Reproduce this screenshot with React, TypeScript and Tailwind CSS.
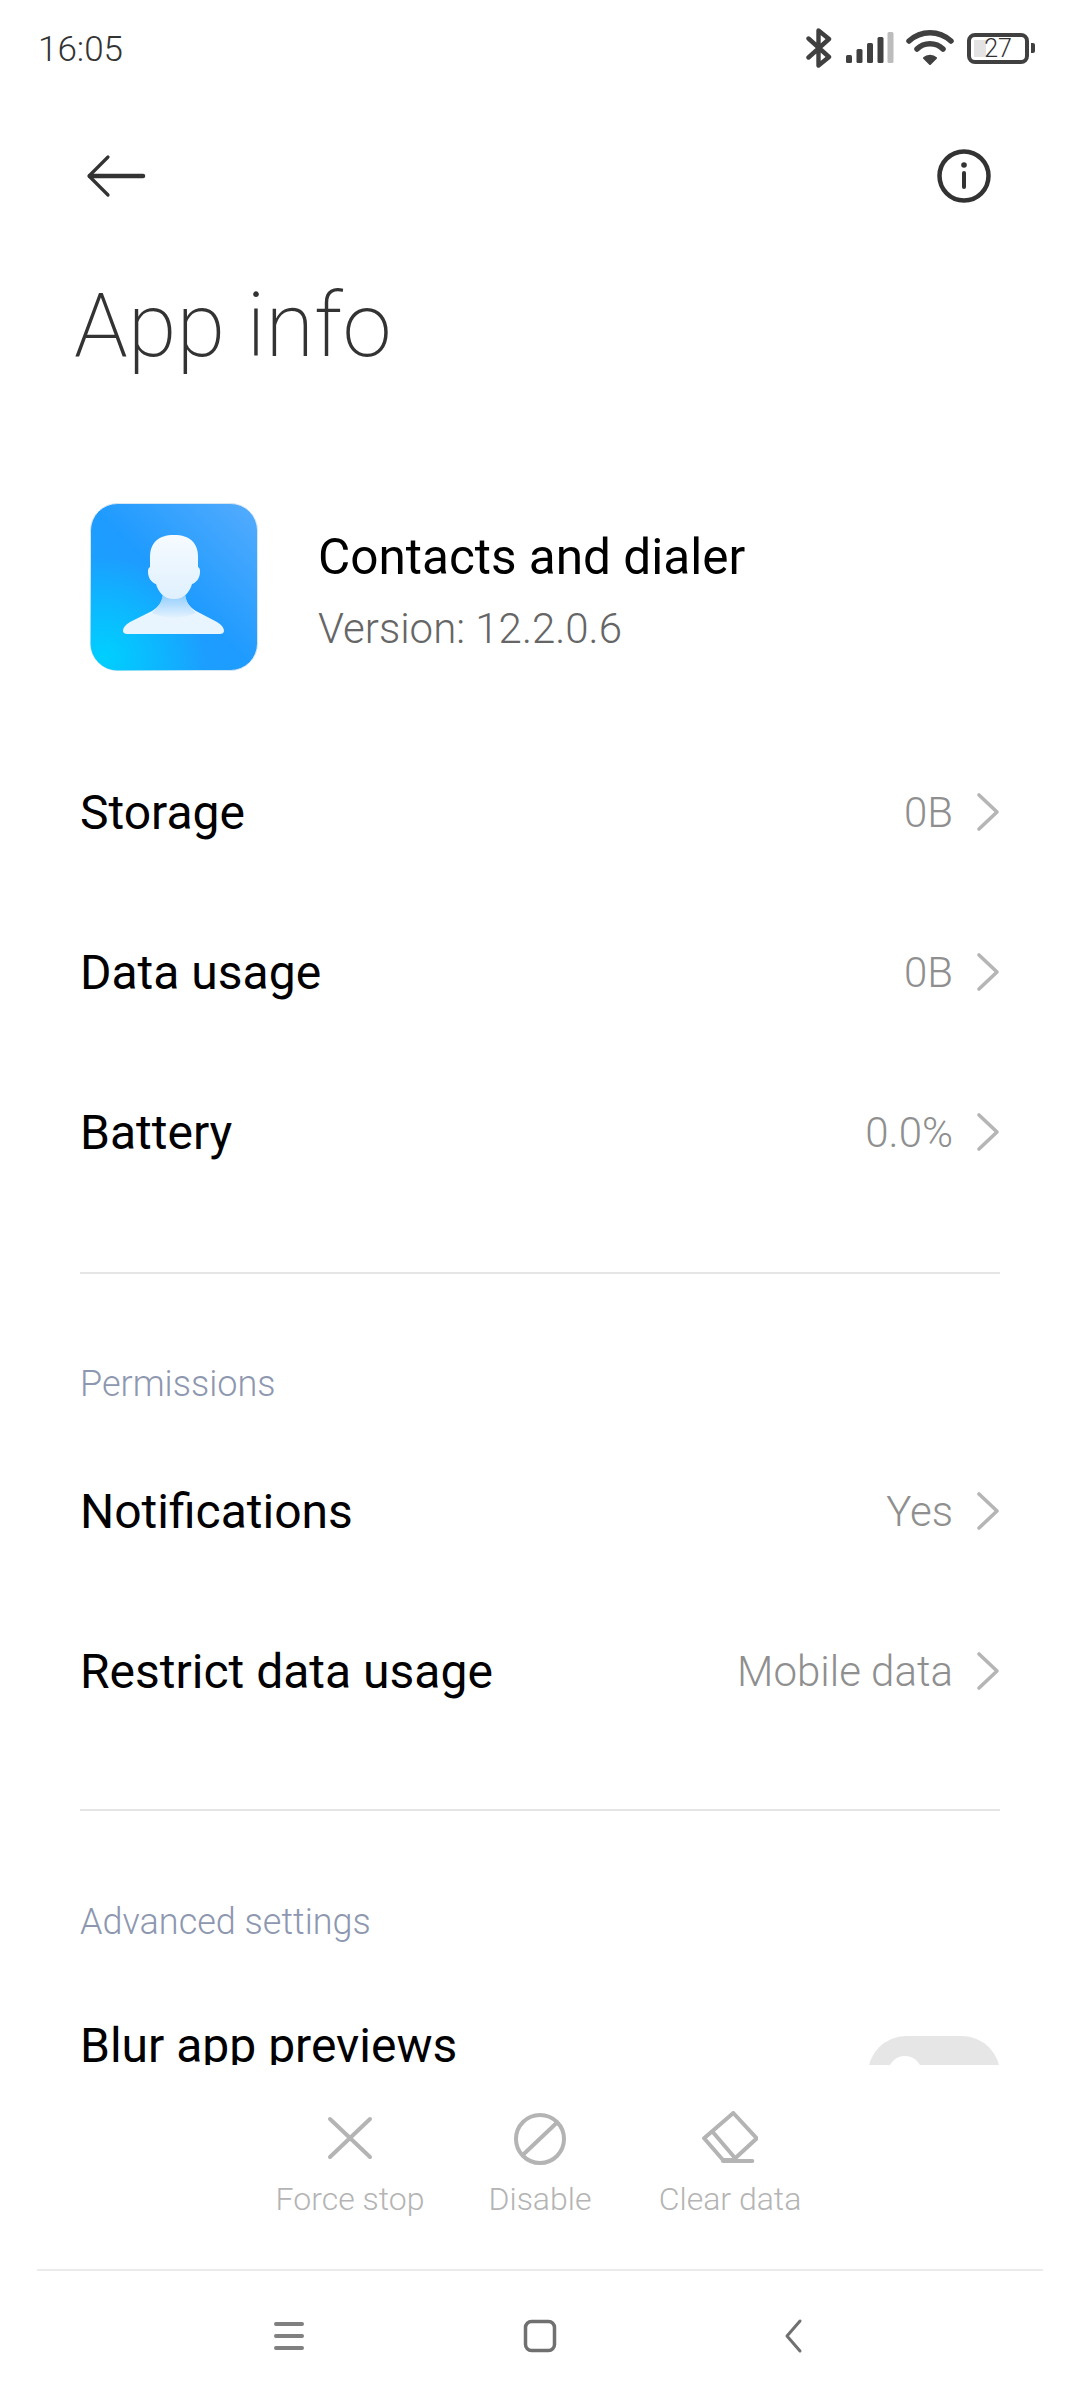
import React from 'react';

const font = "font-['Roboto','Noto_Sans',sans-serif]";

function Bluetooth() {
  return (
    <svg width="26" height="40" viewBox="0 0 26 40" fill="none" stroke="#404040" strokeWidth="4.4" strokeLinecap="round" strokeLinejoin="round">
      <path d="M2.5 10.5 L23 29 L12.5 37.5 V2.5 L23 11 L2.5 29.5" />
    </svg>
  );
}

function Signal() {
  const bars = [
    { x: 0, h: 8, c: '#404040' },
    { x: 10.5, h: 14, c: '#404040' },
    { x: 21, h: 20, c: '#404040' },
    { x: 31.5, h: 26, c: '#404040' },
    { x: 41.5, h: 31, c: '#bcbcbc' },
  ];
  return (
    <svg width="48" height="32" viewBox="0 0 48 32">
      {bars.map((b) => (
        <rect key={b.x} x={b.x} y={31 - b.h} width="6" height={b.h} rx="1.5" fill={b.c} />
      ))}
    </svg>
  );
}

function Wifi() {
  return (
    <svg width="48" height="36" viewBox="0 0 48 36" fill="none" stroke="#404040" strokeWidth="5.5" strokeLinecap="round">
      <path d="M3 11 C15 0 33 0 45 11" />
      <path d="M11 19 C18 12 30 12 37 19" />
      <path d="M24 34 L18 28 C21 25 27 25 30 28 Z" fill="#404040" stroke="#404040" strokeWidth="2" strokeLinejoin="round" />
    </svg>
  );
}

function Battery() {
  return (
    <div className="flex items-center">
      <div className="relative flex h-[31px] w-[62px] items-center justify-center rounded-[8px] border-[4px] border-[#404040]">
        <div className="absolute left-[3px] top-[3px] h-[17px] w-[12px] bg-[#e3e3e3]" />
        <span className="relative text-[25px] font-light leading-none text-[#333]">27</span>
      </div>
      <div className="ml-[2px] h-[10px] w-[4px] rounded-r-[2px] bg-[#404040]" />
    </div>
  );
}

function AppIcon() {
  return (
    <svg width="168" height="168" viewBox="0 0 168 168">
      <defs>
        <linearGradient id="iconBg" x1="1" y1="0" x2="0" y2="1">
          <stop offset="0" stopColor="#55acfd" />
          <stop offset="0.5" stopColor="#1f9bff" />
          <stop offset="1" stopColor="#12a8ff" />
        </linearGradient>
        <radialGradient id="iconGlow" cx="0.08" cy="0.92" r="0.6">
          <stop offset="0" stopColor="#00cfff" />
          <stop offset="1" stopColor="#00cfff" stopOpacity="0" />
        </radialGradient>
        <linearGradient id="person" x1="0" y1="0" x2="0" y2="1">
          <stop offset="0" stopColor="#f6fbff" />
          <stop offset="1" stopColor="#dff0fe" />
        </linearGradient>
        <linearGradient id="neck" x1="0" y1="0" x2="0" y2="1">
          <stop offset="0" stopColor="#8ccaff" />
          <stop offset="1" stopColor="#e3f2fe" />
        </linearGradient>
      </defs>
      <rect x="0.5" y="0.5" width="167" height="167" rx="27" fill="url(#iconBg)" stroke="#d6e6f2" />
      <rect x="0.5" y="0.5" width="167" height="167" rx="27" fill="url(#iconGlow)" />
      <path
        d="M62 108 C68 104 72 100 73 92 L95 92 C96 100 100 104 106 108 L127 119 C132 122 134 125 134 128 C134 130 132 131 130 131 L37 131 C35 131 33 130 33 128 C33 125 35 122 40 119 Z"
        fill="#e8f4fe"
      />
      <path d="M73 90 L95 90 C96 100 100 104 106 110 C92 116 76 116 62 110 C68 104 72 100 73 90 Z" fill="url(#neck)" />
      <path
        d="M84 32 C68 32 60 40 60 54 L60 64 C58 65 58 67 58 69 C58 75 62 80 66 81 C68 88 73 96 84 96 C95 96 100 88 102 81 C106 80 110 75 110 69 C110 67 110 65 108 64 L108 54 C108 40 100 32 84 32 Z"
        fill="url(#person)"
      />
    </svg>
  );
}

function Row({ label, value }: { label: string; value: string }) {
  return (
    <div className="flex h-[160px] items-center justify-between">
      <span className="mt-[-1px] text-[48px] text-black">{label}</span>
      <div className="mt-[-2px] flex items-center">
        <span className="text-[42px] font-light text-[#8f8f8f]">{value}</span>
        <svg width="24" height="40" viewBox="0 0 24 40" fill="none" stroke="#b5b5b5" strokeWidth="3.6" strokeLinecap="round" strokeLinejoin="round" className="ml-[23px]">
          <path d="M3 3 L21 20 L3 37" />
        </svg>
      </div>
    </div>
  );
}

function Action({ label, children }: { label: string; children: React.ReactNode }) {
  return (
    <div className="flex w-[190px] flex-col items-center">
      <svg width="56" height="56" viewBox="0 0 56 56" fill="none" stroke="#b4b4b4" strokeWidth="4" strokeLinecap="round" strokeLinejoin="round">
        {children}
      </svg>
      <span className="mt-[12px] text-[32px] font-light leading-[40px] text-[#b4b4b4]">{label}</span>
    </div>
  );
}

export default function App() {
  return (
    <div className={`${font} flex h-[2400px] w-[1080px] flex-col overflow-hidden bg-white`}>
      <div className="flex-1 overflow-hidden">
        {/* status bar */}
        <div className="flex h-[96px] items-center justify-between pl-[38px] pr-[45px]">
          <span className="mt-[5px] text-[35px] font-light text-[#333]">16:05</span>
          <div className="flex items-center">
            <Bluetooth />
            <div className="ml-[14px]"><Signal /></div>
            <div className="ml-[12px]"><Wifi /></div>
            <div className="ml-[13px]"><Battery /></div>
          </div>
        </div>

        {/* toolbar */}
        <div className="flex h-[160px] items-center justify-between pl-[86px] pr-[89px]">
          <svg width="60" height="44" viewBox="0 0 60 44" fill="none" stroke="#333" strokeWidth="4.5" strokeLinecap="round" strokeLinejoin="round">
            <path d="M57 22 H4" />
            <path d="M22 3 L3 22 L22 41" strokeWidth="3.2" />
          </svg>
          <svg width="54" height="54" viewBox="0 0 54 54" fill="none" stroke="#333" strokeWidth="4.5">
            <circle cx="27" cy="27" r="24.5" />
            <path d="M27 24 V38" strokeLinecap="round" strokeWidth="4" />
            <circle cx="27" cy="16" r="2.8" fill="#333" stroke="none" />
          </svg>
        </div>

        <h1 className="ml-[74px] mt-[20px] text-[88.5px] font-extralight leading-[100px] text-[#333]">App info</h1>

        {/* app header */}
        <div className="ml-[90px] mt-[127px] flex items-center">
          <AppIcon />
          <div className="ml-[60px] pt-[6px]">
            <div className="text-[49.5px] leading-[60px] text-black">Contacts and dialer</div>
            <div className="mt-[17px] text-[42px] font-light leading-[50px] text-[#666]">Version: 12.2.0.6</div>
          </div>
        </div>

        <div className="px-[80px]">
          <div className="mt-[62px]">
            <Row label="Storage" value="0B" />
            <Row label="Data usage" value="0B" />
            <Row label="Battery" value="0.0%" />
          </div>
          <div className="mt-[59px] h-[2px] bg-[#e5e5e5]" />
          <div className="mt-[90px] text-[36px] font-light leading-[40px] text-[#8e97b0]">Permissions</div>
          <div className="mt-[28px]">
            <Row label="Notifications" value="Yes" />
            <Row label="Restrict data usage" value="Mobile data" />
          </div>
          <div className="mt-[57px] h-[2px] bg-[#e5e5e5]" />
          <div className="mt-[91px] text-[36px] font-light leading-[40px] text-[#8e97b0]">Advanced settings</div>
          <div className="mt-[74px] flex items-start justify-between">
            <span className="text-[48px] leading-[60px] text-black">Blur app previews</span>
            <div className="relative mt-[20px] h-[76px] w-[132px] rounded-full bg-[#e6e6e6]">
              <div className="absolute left-[20px] top-[20px] h-[36px] w-[34px] rounded-full bg-white" />
            </div>
          </div>
        </div>
      </div>

      {/* bottom actions */}
      <div className="h-[335px] shrink-0 bg-white">
        <div className="flex h-[204px] items-start justify-center pt-[46px]">
          <Action label="Force stop">
            <path d="M8 8 L48 46 M48 8 L8 46" />
          </Action>
          <Action label="Disable">
            <circle cx="28" cy="28" r="24" />
            <path d="M44.5 12 L11.8 43" />
          </Action>
          <Action label="Clear data">
            <path d="M31.3 2 L54.8 27.3 L31.3 49 H21 L2.1 27.3 Z" />
            <path d="M11.4 21.7 L33 47" />
            <path d="M21 50 H50.3" />
          </Action>
        </div>
        <div className="mx-[37px] h-[2px] bg-[#ebebeb]" />
        <div className="flex h-[129px] items-center justify-center">
          <div className="flex w-[253px] justify-center pl-[3px]">
            <svg width="32" height="32" viewBox="0 0 32 32" fill="none" stroke="#808080" strokeWidth="4" strokeLinecap="round">
              <path d="M3 4 H29 M3 16 H29 M3 28 H29" />
            </svg>
          </div>
          <div className="flex w-[253px] justify-center">
            <svg width="34" height="34" viewBox="0 0 34 34" fill="none" stroke="#707070" strokeWidth="3.5">
              <rect x="2.5" y="2.5" width="29" height="29" rx="6" />
            </svg>
          </div>
          <div className="flex w-[253px] justify-center">
            <svg width="22" height="36" viewBox="0 0 22 36" fill="none" stroke="#707070" strokeWidth="3" strokeLinecap="round" strokeLinejoin="round">
              <path d="M18 3 L5 18 L18 33" />
            </svg>
          </div>
        </div>
      </div>
    </div>
  );
}
